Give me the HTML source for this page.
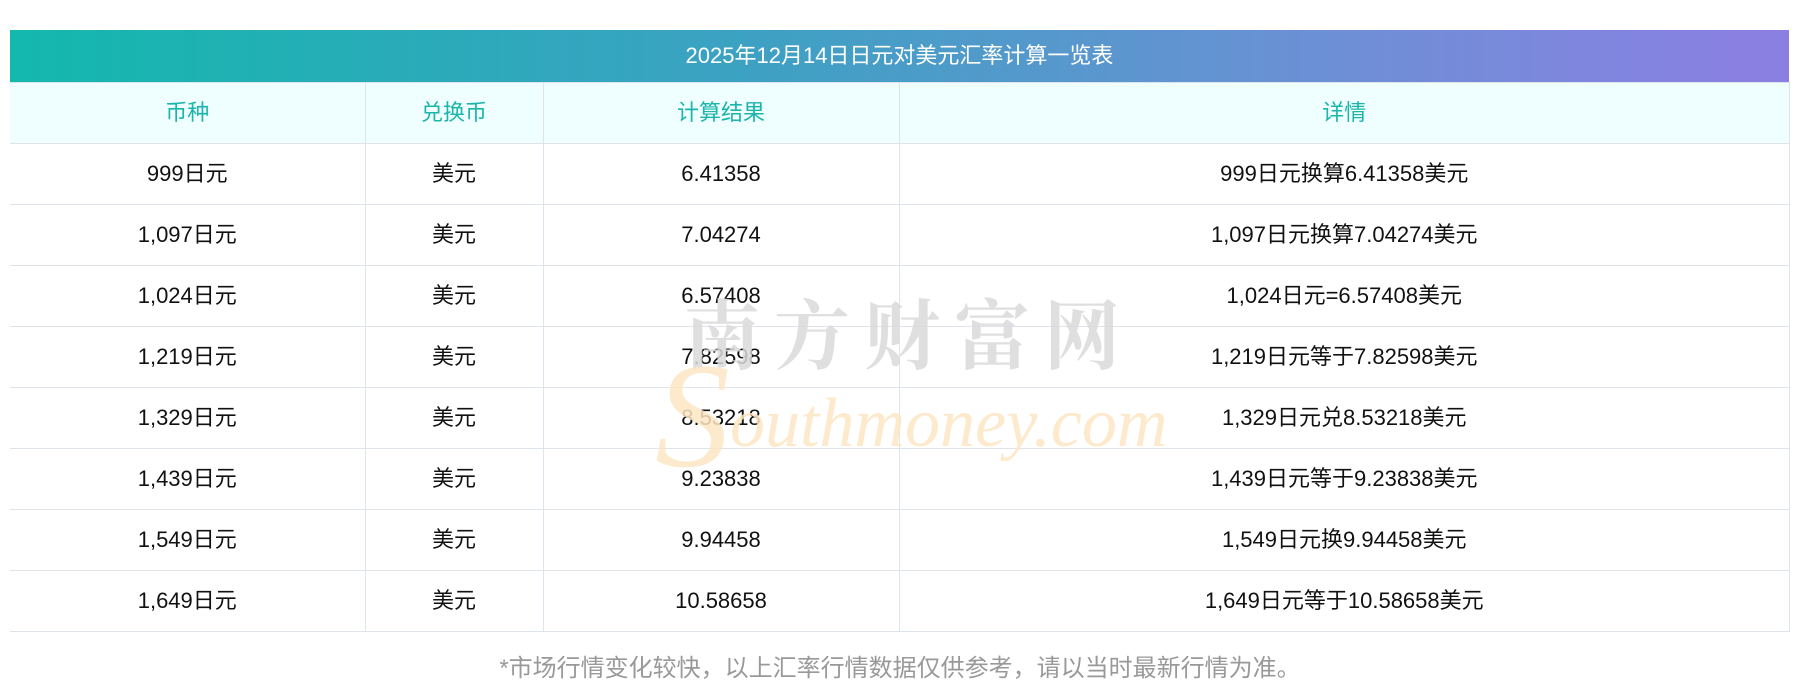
<!DOCTYPE html>
<html><head><meta charset="utf-8"><style>
body{margin:0;width:1800px;height:697px;background:#fff;font-family:"Liberation Sans","Noto Sans CJK SC",sans-serif;position:relative;overflow:hidden}
.title{position:absolute;left:10px;top:30px;width:1779px;height:52px;background:linear-gradient(90deg,#13b8ad,#3ba2c2 40%,#6e8fd6 75%,#8c7fe3);color:#fff;font-size:22px;line-height:52px;text-align:center}
table{position:absolute;left:10px;top:82px;width:1780px;border-collapse:collapse;table-layout:fixed}
td,th{border:1px solid #dfe3ec;height:60px;text-align:center;font-size:22px;line-height:26px;font-weight:normal;color:#111;padding:0;vertical-align:middle}
th{background:#effefe;color:#1bb5ac}
tr>*:first-child{border-left:none}
.foot{position:absolute;top:648px;left:0;width:1800px;text-align:center;color:#999;font-size:24px}
.wm1{position:absolute;left:684px;top:286px;font-size:76px;line-height:90px;color:#dadada;letter-spacing:14px;font-family:"Noto Serif CJK SC",serif;font-weight:bold;opacity:.85}
.wm2{position:absolute;left:655px;top:330px;font-size:70px;color:#fde6c2;font-style:italic;font-family:"Liberation Serif",serif;opacity:.85}
</style></head><body>
<div class="title">2025年12月14日日元对美元汇率计算一览表</div>
<table>
<colgroup><col style="width:355px"><col style="width:178px"><col style="width:356px"><col></colgroup>
<tr><th>币种</th><th>兑换币</th><th>计算结果</th><th>详情</th></tr>
<tr><td>999日元</td><td>美元</td><td>6.41358</td><td>999日元换算6.41358美元</td></tr>
<tr><td>1,097日元</td><td>美元</td><td>7.04274</td><td>1,097日元换算7.04274美元</td></tr>
<tr><td>1,024日元</td><td>美元</td><td>6.57408</td><td>1,024日元=6.57408美元</td></tr>
<tr><td>1,219日元</td><td>美元</td><td>7.82598</td><td>1,219日元等于7.82598美元</td></tr>
<tr><td>1,329日元</td><td>美元</td><td>8.53218</td><td>1,329日元兑8.53218美元</td></tr>
<tr><td>1,439日元</td><td>美元</td><td>9.23838</td><td>1,439日元等于9.23838美元</td></tr>
<tr><td>1,549日元</td><td>美元</td><td>9.94458</td><td>1,549日元换9.94458美元</td></tr>
<tr><td>1,649日元</td><td>美元</td><td>10.58658</td><td>1,649日元等于10.58658美元</td></tr>
</table>
<div class="wm1">南方财富网</div>
<div class="wm2"><span style="font-size:150px;vertical-align:-20px">S</span>outhmoney.com</div>
<div class="foot">*市场行情变化较快，以上汇率行情数据仅供参考，请以当时最新行情为准。</div>
</body></html>
